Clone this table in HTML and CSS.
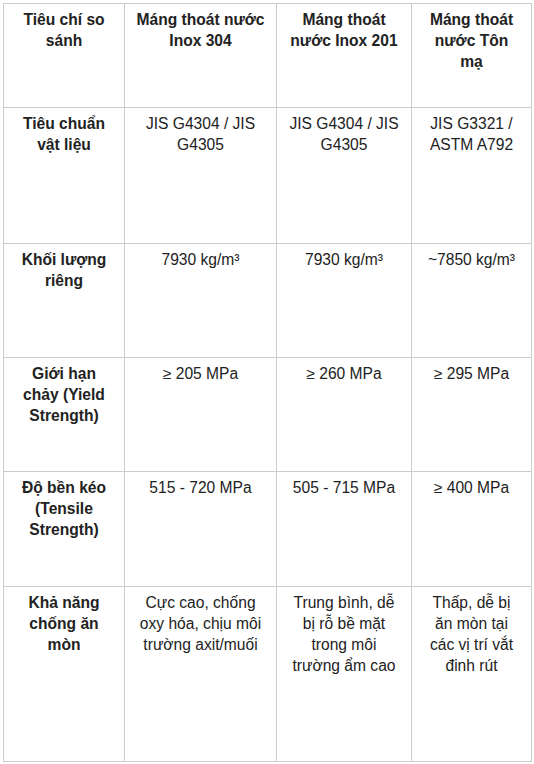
FILE: index.html
```html
<!DOCTYPE html>
<html lang="vi">
<head>
<meta charset="utf-8">
<title>So sánh máng thoát nước</title>
<link rel="stylesheet" href="styles.css">
</head>
<body>
<table class="compare">
  <colgroup>
    <col class="c1"><col class="c2"><col class="c3"><col class="c4">
  </colgroup>
  <tr class="r-head">
    <th>Tiêu chí so sánh</th>
    <th>Máng thoát nước Inox 304</th>
    <th>Máng thoát nước Inox 201</th>
    <th>Máng thoát nước Tôn mạ</th>
  </tr>
  <tr class="r1">
    <th>Tiêu chuẩn vật liệu</th>
    <td>JIS G4304 / JIS G4305</td>
    <td>JIS G4304 / JIS G4305</td>
    <td>JIS G3321 / ASTM A792</td>
  </tr>
  <tr class="r2">
    <th>Khối lượng riêng</th>
    <td>7930 kg/m³</td>
    <td>7930 kg/m³</td>
    <td>~7850 kg/m³</td>
  </tr>
  <tr class="r3">
    <th>Giới hạn chảy (Yield Strength)</th>
    <td>≥ 205 MPa</td>
    <td>≥ 260 MPa</td>
    <td>≥ 295 MPa</td>
  </tr>
  <tr class="r4">
    <th>Độ bền kéo (Tensile Strength)</th>
    <td>515 - 720 MPa</td>
    <td>505 - 715 MPa</td>
    <td>≥ 400 MPa</td>
  </tr>
  <tr class="r5">
    <th>Khả năng chống ăn mòn</th>
    <td>Cực cao, chống oxy hóa, chịu môi trường axit/muối</td>
    <td>Trung bình, dễ bị rỗ bề mặt trong môi trường ẩm cao</td>
    <td>Thấp, dễ bị ăn mòn tại các vị trí vắt đinh rút</td>
  </tr>
</table>
</body>
</html>
```

FILE: styles.css
```css
html, body {
  margin: 0;
  padding: 0;
  background: #ffffff;
}

body {
  padding: 3px;
  font-family: "Liberation Sans", Arial, sans-serif;
  font-size: 15.6px;
  line-height: 21px;
  color: #222222;
}

.compare {
  border-collapse: collapse;
  table-layout: fixed;
  width: 528px;
}

.c1 { width: 121px; }
.c2 { width: 152px; }
.c3 { width: 135px; }
.c4 { width: 120px; }

.compare th,
.compare td {
  border: 1px solid #cccccc;
  padding: 5px 11px;
  text-align: center;
  vertical-align: top;
}

.compare th {
  font-weight: bold;
}

.compare td {
  font-weight: normal;
}

.r-head { height: 104px; }
.r1 { height: 136px; }
.r2 { height: 114px; }
.r3 { height: 114px; }
.r4 { height: 115px; }
.r5 { height: 175px; }
```
